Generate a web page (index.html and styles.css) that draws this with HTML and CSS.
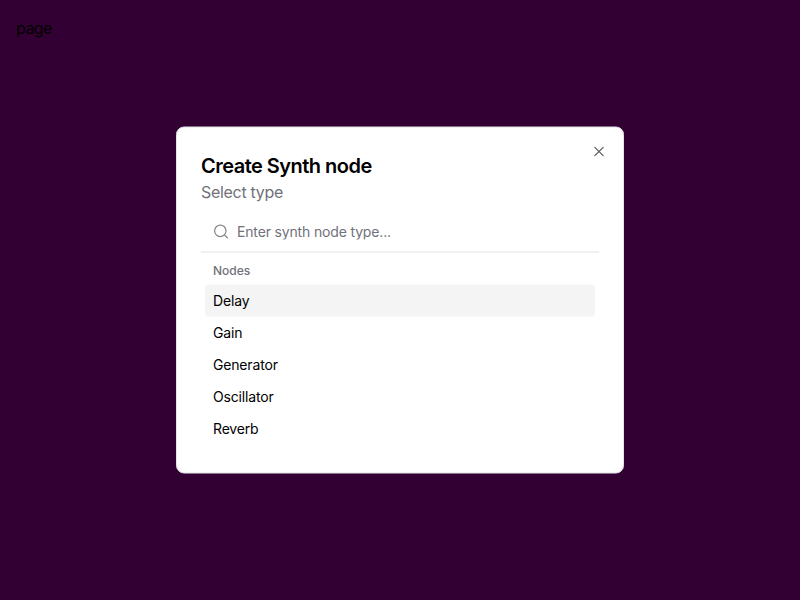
FILE: index.html
```html
<!DOCTYPE html>
<html lang="en">
<head>
<meta charset="utf-8">
<title>Create Synth node</title>
<link rel="stylesheet" href="styles.css">
</head>
<body>
<main class="page">page</main>
<section class="dialog" role="dialog" aria-labelledby="title">
  <header class="header">
    <h2 class="title" id="title">Create Synth node</h2>
    <p class="description">Select type</p>
  </header>
  <div class="command">
    <label class="search">
      <svg class="search-icon" viewBox="0 0 16 16" fill="none" stroke="currentColor" stroke-width="1.25" stroke-linecap="round"><circle cx="7.3" cy="7.3" r="5.7"/><path d="M11.4 11.4L14.3 14.3"/></svg>
      <input class="input" type="text" placeholder="Enter synth node type...">
    </label>
    <div class="list">
      <div class="heading">Nodes</div>
      <div class="item selected">Delay</div>
      <div class="item">Gain</div>
      <div class="item">Generator</div>
      <div class="item">Oscillator</div>
      <div class="item">Reverb</div>
    </div>
  </div>
  <button class="close" aria-label="Close"><svg class="close-icon" viewBox="0 0 16 16" fill="none" stroke="currentColor" stroke-width="1.1" stroke-linecap="round"><path d="M3.8 3.8l8.4 8.4M12.2 3.8l-8.4 8.4"/></svg></button>
</section>
</body>
</html>
```
FILE: styles.css
```css
* { box-sizing: border-box; margin: 0; }
body { font: 16px/24px Inter, sans-serif; background: #330033; color: #000; }
.page { padding: 16px; letter-spacing: -0.55px; }
.dialog {
  position: fixed;
  top: 50%;
  left: 50%;
  transform: translate(-50%, -50%);
  display: flex;
  flex-direction: column;
  gap: 8px;
  width: 448px;
  padding: 24px;
  border: 1px solid #e4e4e7;
  border-radius: 8px;
  background: #fff;
  color: #000;
}
.title { font-size: 20px; line-height: 28px; font-weight: 600; letter-spacing: -0.52px; }
.description { color: #71717a; letter-spacing: -0.31px; }
.search { display: flex; align-items: center; gap: 8px; height: 41px; padding: 0 12px; border-bottom: 1px solid #e4e4e7; color: #71717a; }
.search-icon { width: 16px; height: 16px; opacity: .85; }
.input { flex: 1; border: 0; outline: 0; padding: 0; background: transparent; font: 14px/20px Inter, sans-serif; letter-spacing: -0.16px; }
.input::placeholder { color: #71717a; }
.list { padding: 4px; }
.heading { padding: 6px 8px; font-size: 12px; line-height: 16px; font-weight: 500; color: #71717a; }
.item { padding: 6px 8px; font-size: 14px; line-height: 20px; letter-spacing: -0.17px; border-radius: 4px; color: #000; }
.selected { background: #f4f4f4; }
.close { position: absolute; top: 16px; right: 16px; width: 16px; height: 16px; border: 0; padding: 0; background: none; color: #09090b; opacity: .7; }
.close-icon { display: block; width: 16px; height: 16px; }
```
